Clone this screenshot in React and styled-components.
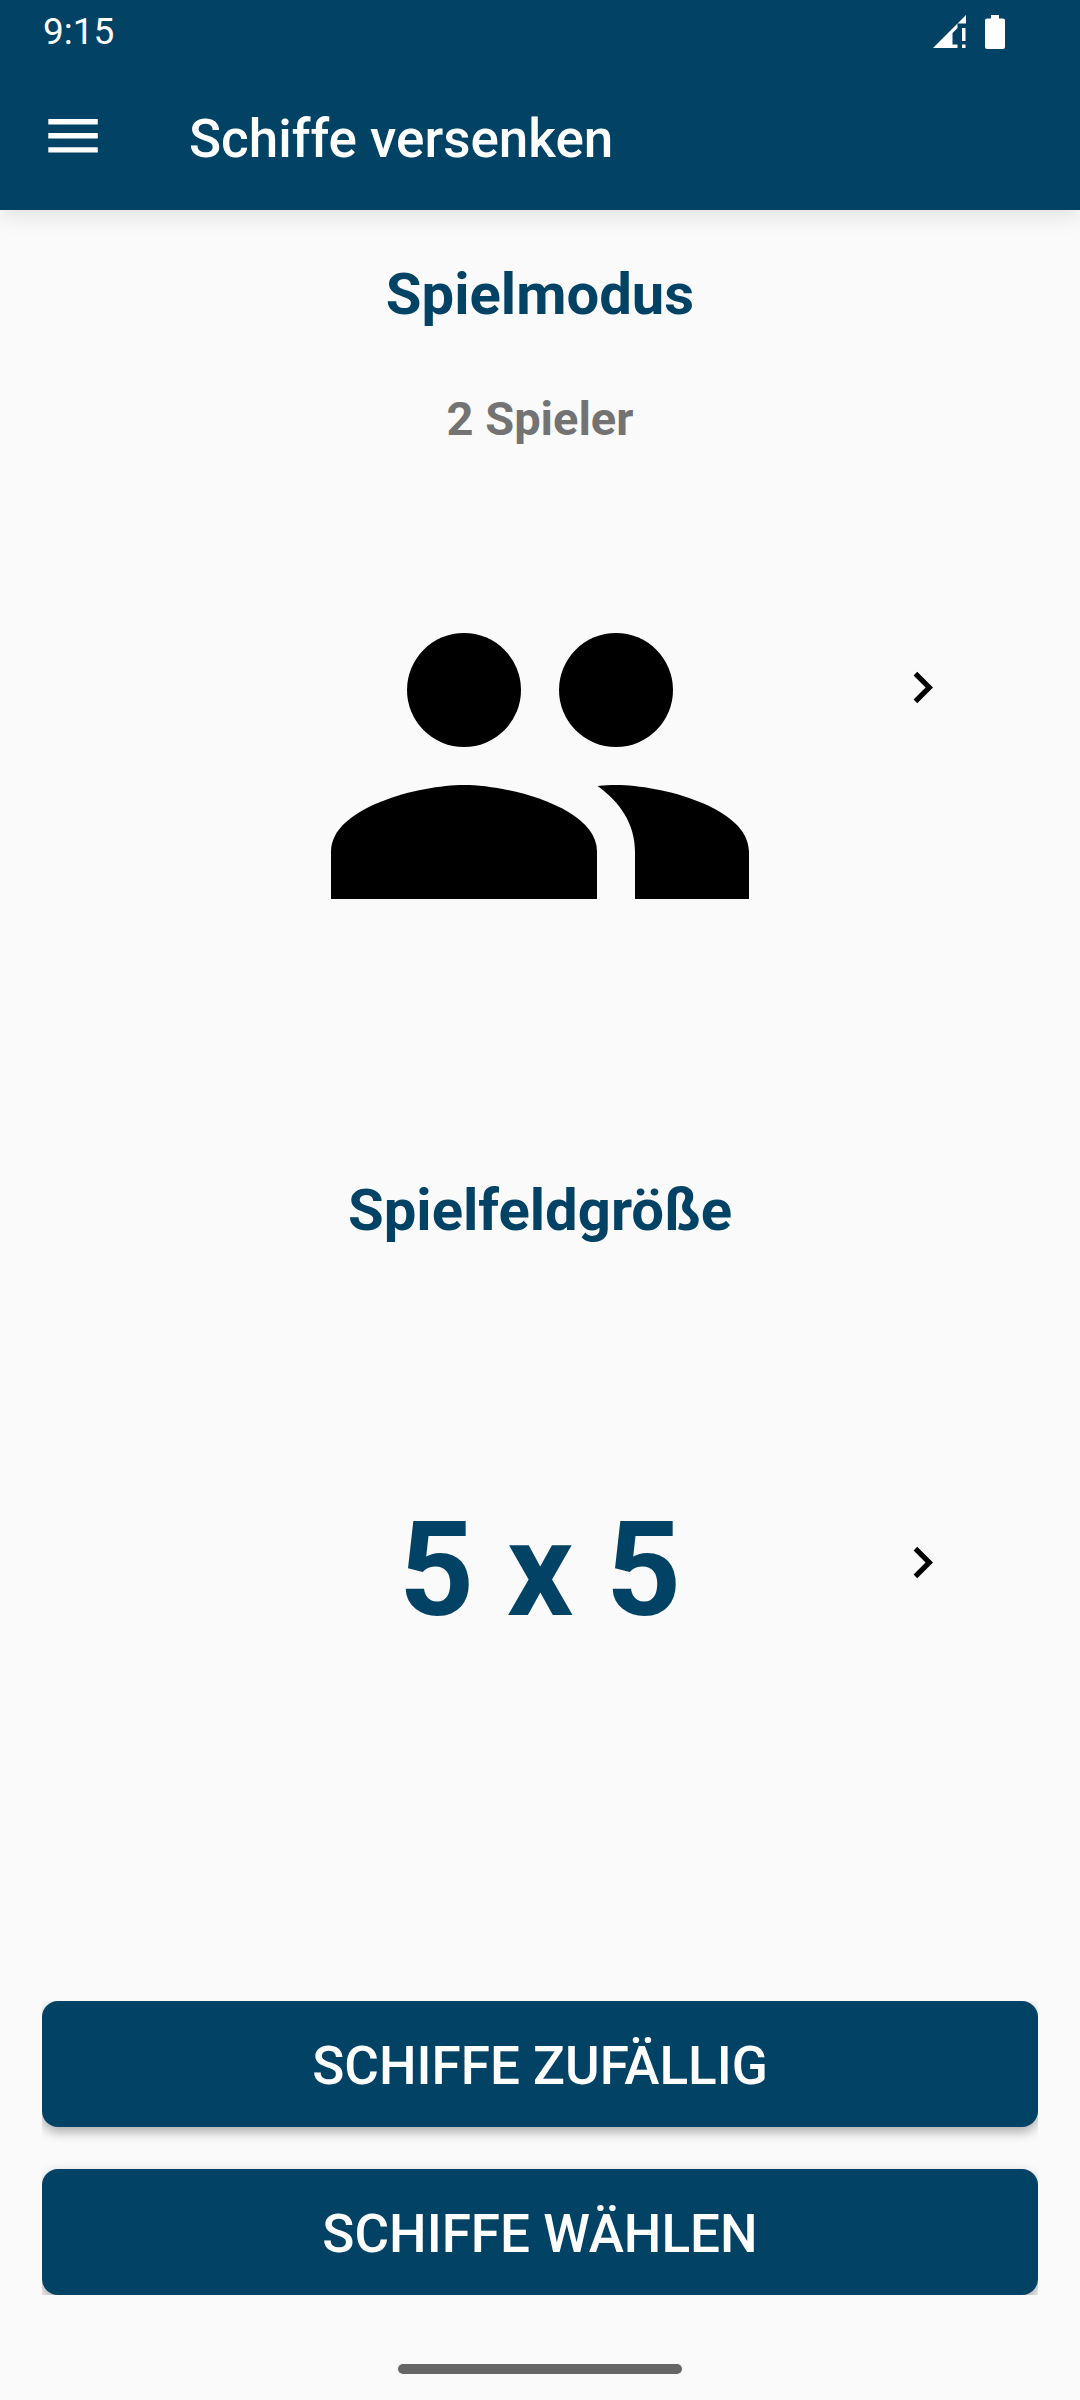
import React from 'react';
import styled, { createGlobalStyle } from 'styled-components';

const NAVY = '#024265';

const GlobalStyle = createGlobalStyle`
  *, *::before, *::after { box-sizing: border-box; }
  body {
    margin: 0;
    background: #fafafa;
    font-family: Roboto, "Liberation Sans", sans-serif;
  }
`;

const Screen = styled.div`
  display: flex;
  flex-direction: column;
  min-height: 100vh;
`;

const Header = styled.header`
  background: ${NAVY};
  color: #fff;
  box-shadow: 0 6px 20px rgba(0, 0, 0, 0.1);
`;

const StatusBar = styled.div`
  display: flex;
  align-items: center;
  justify-content: space-between;
  height: 63px;
  padding: 0 75px 0 43px;
  font-size: 37px;
  line-height: 43px;
`;

const StatusIcons = styled.div`
  display: flex;
  align-items: center;
  gap: 19px;
`;

const Toolbar = styled.div`
  display: flex;
  align-items: center;
  gap: 84px;
  height: 147px;
  padding: 0 42px;
`;

const IconButton = styled.button`
  display: flex;
  align-items: center;
  justify-content: center;
  padding: 0;
  border: 0;
  background: none;
  color: inherit;
  cursor: pointer;
`;

const Title = styled.h1`
  margin: 0;
  padding-top: 4px;
  font-size: 53px;
  font-weight: 500;
  line-height: 62px;
`;

const Main = styled.main`
  display: flex;
  flex: 1;
  flex-direction: column;
  padding: 50px 42px 0;
`;

const Section = styled.section`
  display: flex;
  flex-direction: column;
  text-align: center;
  margin-bottom: ${(p) => p.$after}px;
`;

const Heading = styled.h2`
  margin: 0;
  color: ${NAVY};
  font-size: 58px;
  font-weight: 700;
  line-height: 68px;
`;

const ModeName = styled.p`
  margin: 63px 0 0;
  color: #737373;
  font-size: 47px;
  font-weight: 700;
  line-height: 56px;
`;

const Picker = styled.div`
  display: grid;
  grid-template-columns: 1fr 456px 1fr;
  margin: ${(p) => p.$before}px -42px 0;
  min-height: 314px;
`;

const Choice = styled.div`
  display: flex;
  grid-column: 2;
  align-items: center;
  justify-content: center;
`;

const NextButton = styled(IconButton)`
  height: 300px;
  padding: 0 3px 1px 0;
  color: #000;
`;

const Size = styled.span`
  color: ${NAVY};
  font-size: 131px;
  font-weight: 700;
  line-height: 154px;
`;

const Actions = styled.div`
  display: flex;
  flex-direction: column;
  gap: 42px;
  margin-top: auto;
  overflow: hidden;
`;

const ActionButton = styled.button`
  height: 126px;
  padding: 4px 42px 0;
  border: 0;
  border-radius: 16px;
  background: ${NAVY};
  color: #fff;
  box-shadow: 0 5px 12px rgba(0, 0, 0, 0.32);
  font-family: inherit;
  font-size: 53px;
  font-weight: 500;
  line-height: 62px;
  text-transform: uppercase;
  cursor: pointer;
`;

const NavigationBar = styled.footer`
  display: flex;
  justify-content: center;
  padding: 69px 0 26px;
`;

const Handle = styled.div`
  width: 284px;
  height: 10px;
  border-radius: 5px;
  background: #666;
`;

function SignalIcon() {
  return (
    <svg width="33" height="33" viewBox="0 0 33 33" fill="currentColor" aria-hidden="true">
      <path d="M33 0V8.5H24.5V13L19.5 18V29.5H24.5V33H0Z" />
      <path d="M29 13H32.5V26H29ZM29 29.5H32.5V33H29Z" />
    </svg>
  );
}

function BatteryIcon() {
  return (
    <svg width="20" height="34" viewBox="0 0 20 34" fill="currentColor" aria-hidden="true">
      <path d="M6 0H14V3.5H18Q20 3.5 20 5.5V32Q20 34 18 34H2Q0 34 0 32V5.5Q0 3.5 2 3.5H6Z" />
    </svg>
  );
}

function MenuIcon() {
  return (
    <svg width="63" height="63" viewBox="0 0 63 63" fill="currentColor" aria-hidden="true">
      <path d="M6.3 14H55.8V19.4H6.3ZM6.3 28.1H55.8V33.5H6.3ZM6.3 42.2H55.8V47.6H6.3Z" />
    </svg>
  );
}

function PeopleIcon() {
  return (
    <svg width="456" height="456" viewBox="0 0 24 24" role="img" aria-label="2 Spieler">
      <circle cx="8" cy="8" r="3" />
      <circle cx="16" cy="8" r="3" />
      <path d="M8 13c-2.33 0-7 1.17-7 3.5V19h14v-2.5c0-2.33-4.67-3.5-7-3.5z" />
      <path d="M16 13c-.29 0-.62.02-.97.05 1.16.84 1.97 1.97 1.97 3.45V19h6v-2.5c0-2.33-4.67-3.5-7-3.5z" />
    </svg>
  );
}

function ChevronIcon() {
  return (
    <svg width="63" height="63" viewBox="0 0 24 24" fill="currentColor" aria-hidden="true">
      <path d="M10 6L8.59 7.41 13.17 12l-4.58 4.59L10 18l6-6z" />
    </svg>
  );
}

export default function App() {
  return (
    <Screen>
      <GlobalStyle />
      <Header>
        <StatusBar>
          <span>9:15</span>
          <StatusIcons>
            <SignalIcon />
            <BatteryIcon />
          </StatusIcons>
        </StatusBar>
        <Toolbar>
          <IconButton type="button" aria-label="Menü">
            <MenuIcon />
          </IconButton>
          <Title>Schiffe versenken</Title>
        </Toolbar>
      </Header>
      <Main>
        <Section $after={182}>
          <Heading>Spielmodus</Heading>
          <ModeName>2 Spieler</ModeName>
          <Picker $before={91}>
            <Choice>
              <PeopleIcon />
            </Choice>
            <NextButton type="button" aria-label="Nächster Spielmodus">
              <ChevronIcon />
            </NextButton>
          </Picker>
        </Section>
        <Section $after={42}>
          <Heading>Spielfeldgröße</Heading>
          <Picker $before={169}>
            <Choice>
              <Size>5 x 5</Size>
            </Choice>
            <NextButton type="button" aria-label="Nächste Spielfeldgröße">
              <ChevronIcon />
            </NextButton>
          </Picker>
        </Section>
        <Actions>
          <ActionButton type="button">Schiffe zufällig</ActionButton>
          <ActionButton type="button">Schiffe wählen</ActionButton>
        </Actions>
      </Main>
      <NavigationBar>
        <Handle />
      </NavigationBar>
    </Screen>
  );
}
